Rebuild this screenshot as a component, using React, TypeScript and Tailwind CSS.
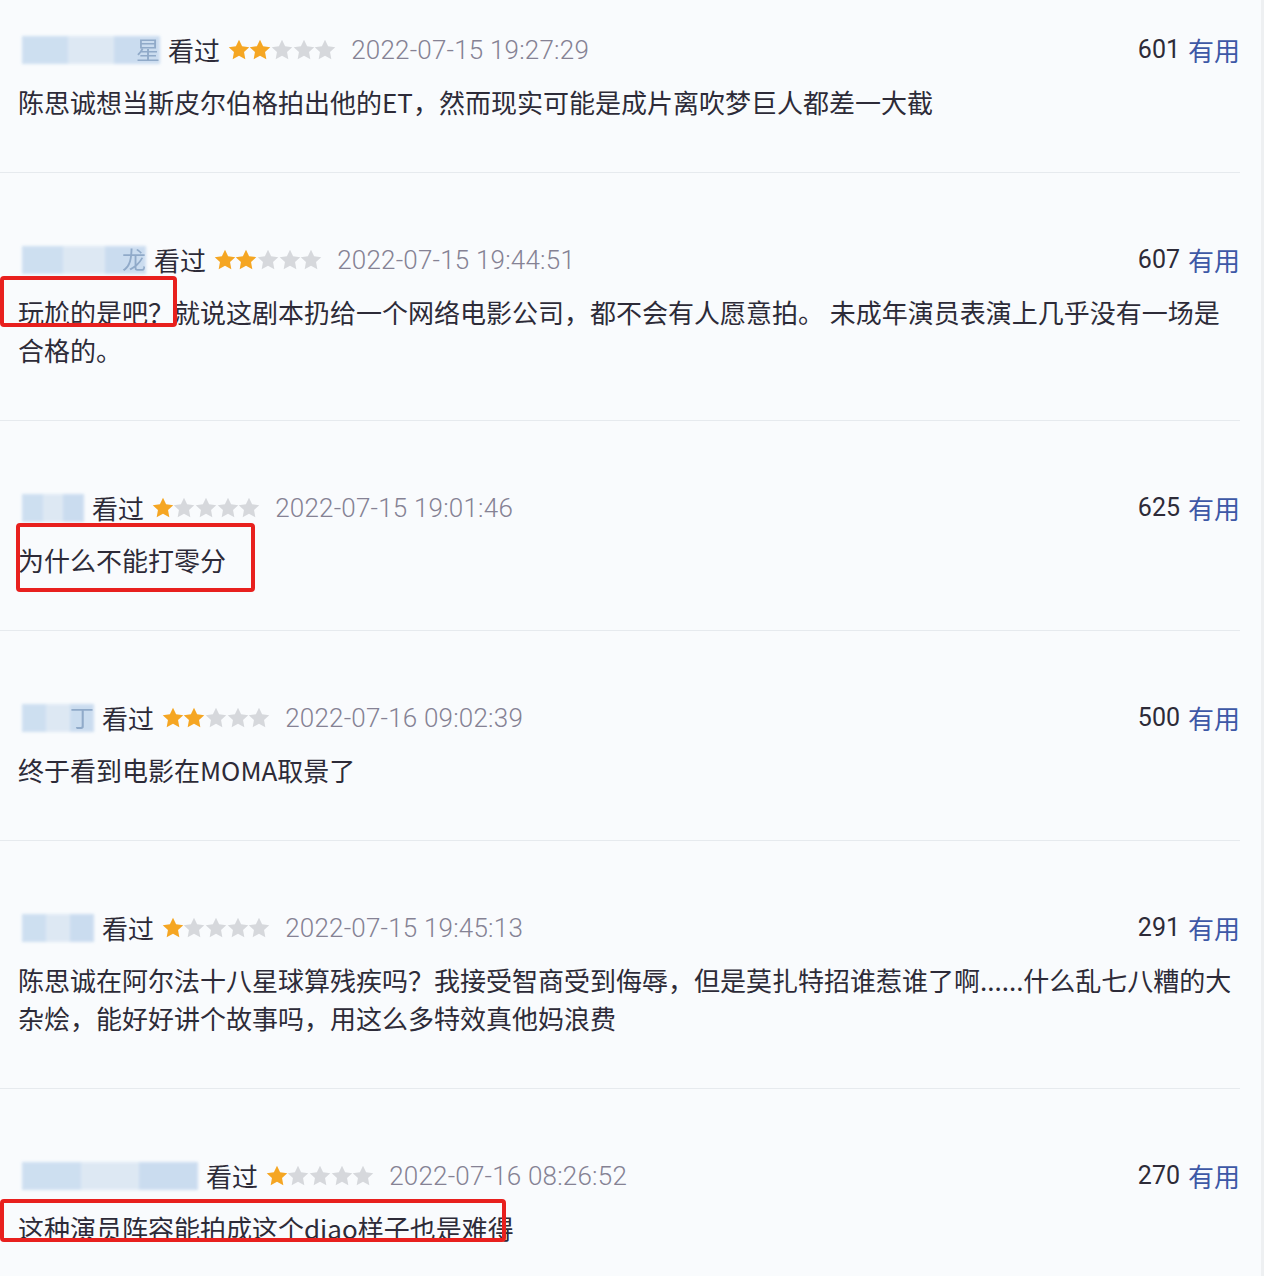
import React from "react";

type Row = {
  nameW: number;
  nameTail?: string;
  stars: number;
  date: string;
  votes: string;
  lines: React.ReactNode;
  box?: { left: number; top: number; width: number; height: number };
};

const Star = ({ on }: { on: boolean }) => (
  <svg width="22" height="22" viewBox="0 0 24 24" className="shrink-0 -mx-[0.2px]">
    <path
      d="M12 0.8l3.4 7.1 7.8 1-5.7 5.3 1.4 7.8L12 18.2l-6.9 3.8 1.4-7.8-5.7-5.3 7.8-1z"
      fill={on ? "#f5a623" : "#d6d8dc"}
    />
  </svg>
);

const rows: Row[] = [
  {
    nameW: 138,
    nameTail: "星",
    stars: 2,
    date: "2022-07-15 19:27:29",
    votes: "601",
    lines: "陈思诚想当斯皮尔伯格拍出他的ET，然而现实可能是成片离吹梦巨人都差一大截",
  },
  {
    nameW: 124,
    nameTail: "龙",
    stars: 2,
    date: "2022-07-15 19:44:51",
    votes: "607",
    lines: "玩尬的是吧？就说这剧本扔给一个网络电影公司，都不会有人愿意拍。 未成年演员表演上几乎没有一场是合格的。",
    box: { left: -18, top: -17, width: 177, height: 51 },
  },
  {
    nameW: 62,
    stars: 1,
    date: "2022-07-15 19:01:46",
    votes: "625",
    lines: "为什么不能打零分",
    box: { left: -2, top: -18, width: 239, height: 69 },
  },
  {
    nameW: 72,
    nameTail: "丁",
    stars: 2,
    date: "2022-07-16 09:02:39",
    votes: "500",
    lines: "终于看到电影在MOMA取景了",
  },
  {
    nameW: 72,
    stars: 1,
    date: "2022-07-15 19:45:13",
    votes: "291",
    lines: "陈思诚在阿尔法十八星球算残疾吗？我接受智商受到侮辱，但是莫扎特招谁惹谁了啊......什么乱七八糟的大杂烩，能好好讲个故事吗，用这么多特效真他妈浪费",
  },
  {
    nameW: 176,
    stars: 1,
    date: "2022-07-16 08:26:52",
    votes: "270",
    lines: "这种演员阵容能拍成这个diao样子也是难得",
    box: { left: -18, top: -10, width: 506, height: 43 },
  },
];

export default function App() {
  return (
    <div
      className="w-[1264px] h-[1276px] overflow-hidden bg-[#f9fbfd] border-r-[3px] border-[#eef0f2]"
      style={{ fontFamily: '"Noto Sans", "Noto Sans CJK SC", sans-serif' }}
    >
      <div className="w-[1240px]">
        {rows.map((r, i) => (
          <div
            key={i}
            className={`${i === 0 ? "pt-[32px]" : "pt-[69px]"} pb-[51px] border-b border-[#e6eaee]`}
          >
            <div className="h-[36px] flex items-center pl-[22px] text-[26px] leading-[36px]">
              <div className="relative shrink-0 h-[28px]" style={{ width: r.nameW }}>
                <div className="absolute inset-0 flex blur-[1.5px] opacity-90">
                  <div className="flex-1 bg-[#c9dcef]" />
                  <div className="flex-1 bg-[#dbe7f3]" />
                  <div className="flex-1 bg-[#c6d9ee]" />
                </div>
                {r.nameTail && (
                  <span className="absolute right-0 top-0 text-[24px] leading-[28px] text-[#6b8ab0] opacity-60">
                    {r.nameTail}
                  </span>
                )}
              </div>
              <span className="ml-[8px] text-[#2d2b38]" style={{ fontFamily: '"Noto Sans CJK SC", sans-serif' }}>看过</span>
              <span className="ml-[8px] flex items-center">
                {[0, 1, 2, 3, 4].map((k) => (
                  <Star key={k} on={k < r.stars} />
                ))}
              </span>
              <span
                className="ml-[15px] text-[#858294] text-[26px] font-light tracking-[0.2px]"
                style={{ fontFamily: 'Roboto, "Noto Sans", sans-serif' }}
              >
                {r.date}
              </span>
              <span className="ml-auto flex items-center gap-[8px]">
                <span className="text-[#2d2b38] text-[25px]" style={{ fontFamily: 'Roboto, sans-serif' }}>
                  {r.votes}
                </span>
                <span className="text-[#3d58a6]" style={{ fontFamily: '"Noto Sans CJK SC", sans-serif' }}>有用</span>
              </span>
            </div>
            <div
              className="relative mt-[15px] pl-[18px] text-[26px] leading-[38px] text-[#2d2b38]"
              style={{ fontFamily: '"Noto Sans CJK SC", sans-serif' }}
            >
              {r.box && (
                <div
                  className="absolute border-[4px] border-[#e8201e] rounded-[4px] pointer-events-none"
                  style={{ left: 18 + r.box.left, top: r.box.top, width: r.box.width, height: r.box.height }}
                />
              )}
              {r.lines}
            </div>
          </div>
        ))}
      </div>
    </div>
  );
}
